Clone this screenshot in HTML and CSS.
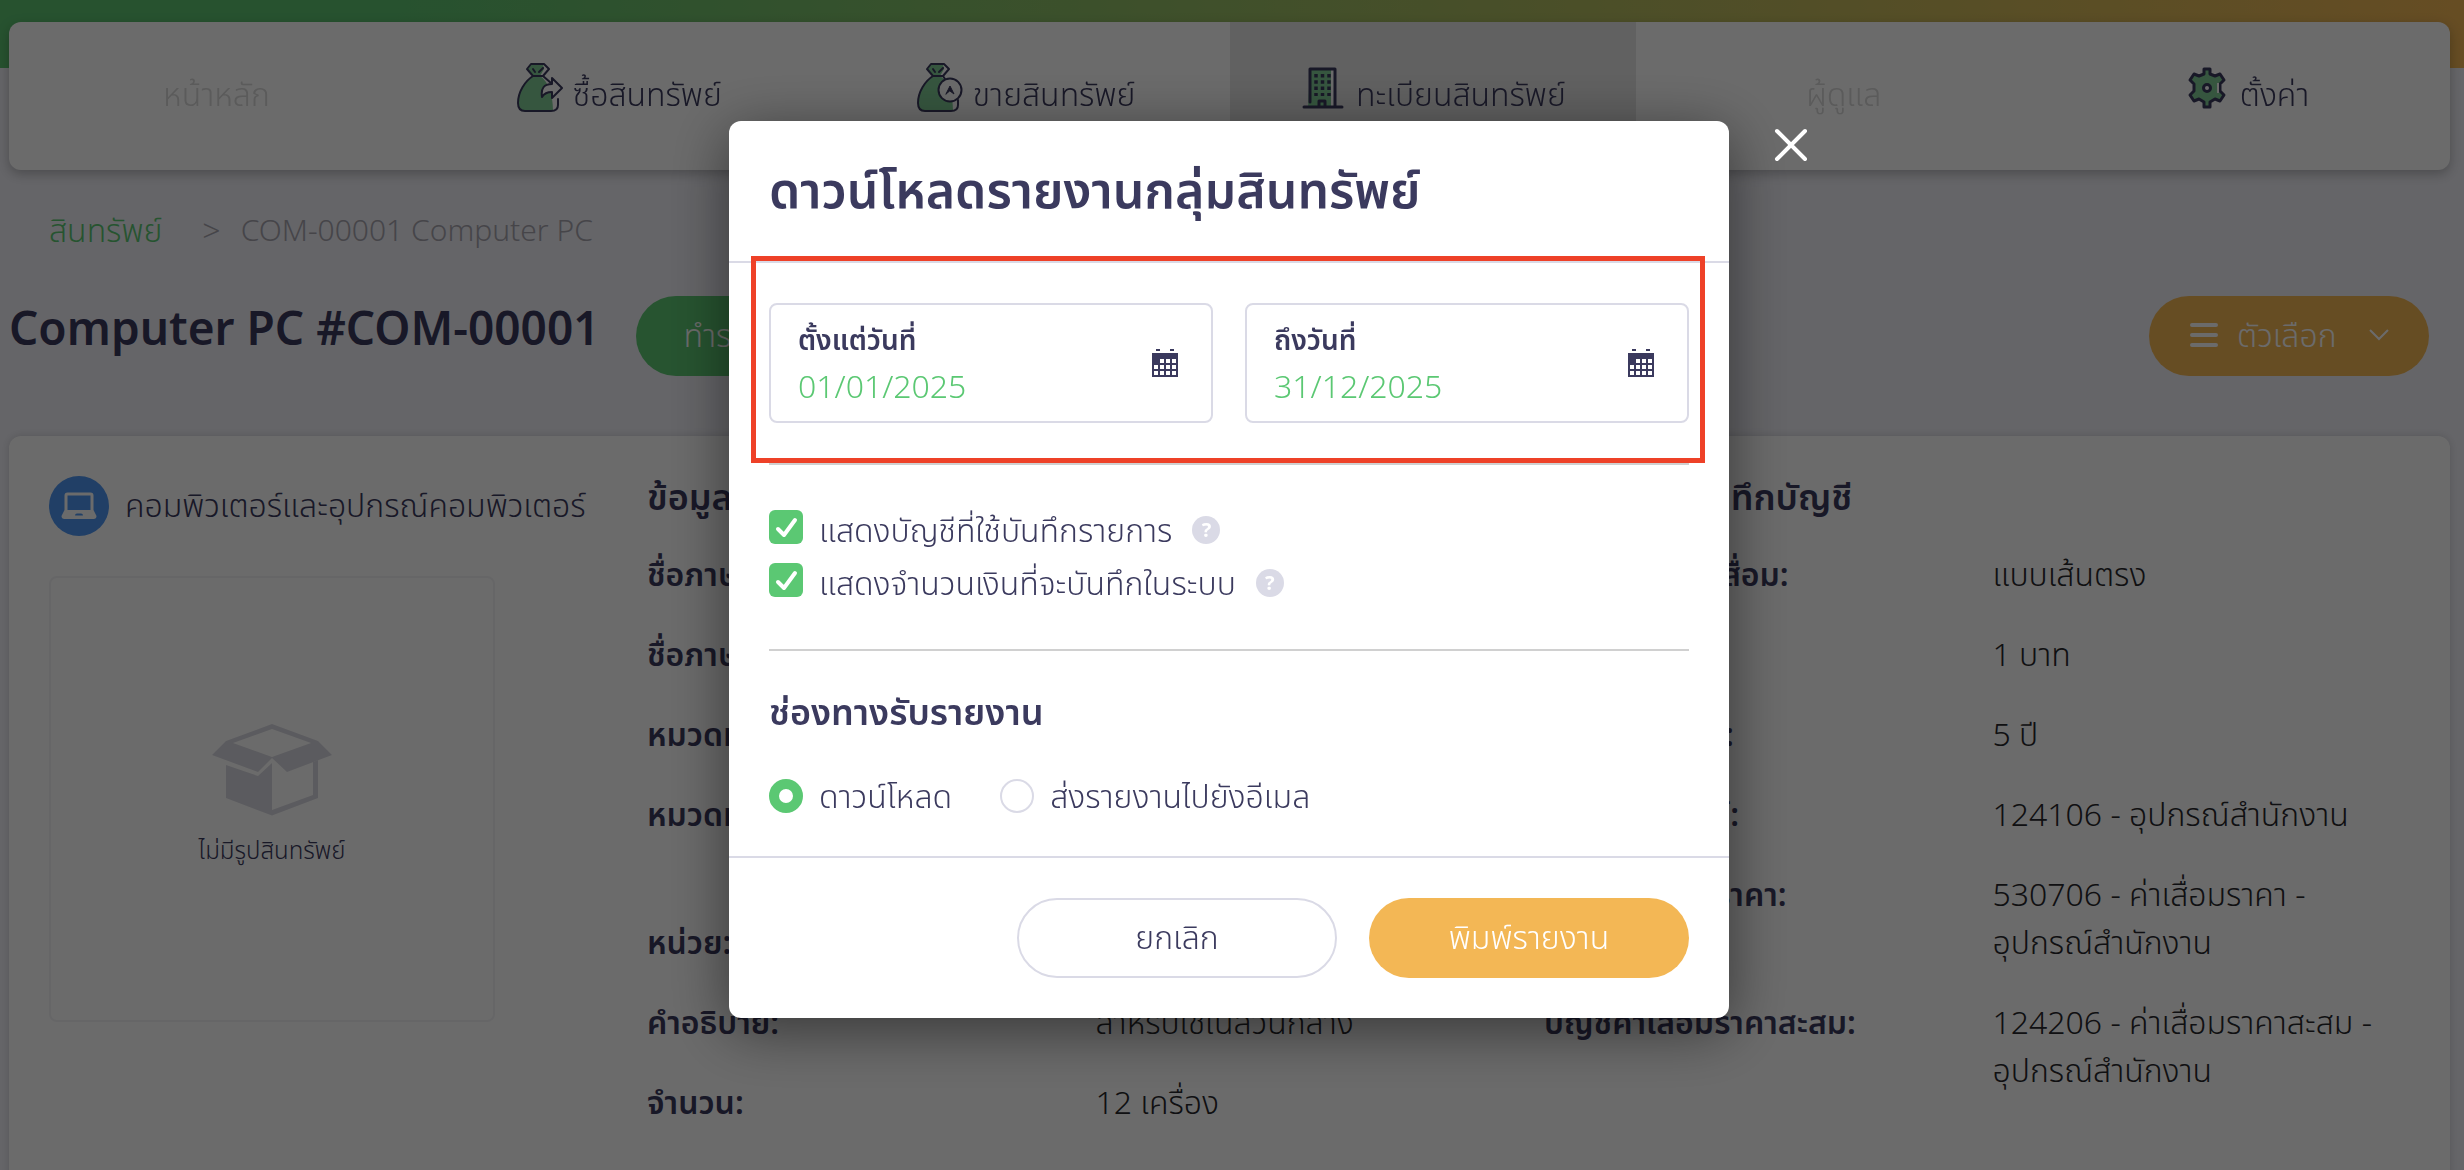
FILE: index.html
```html
<!DOCTYPE html>
<html lang="th">
<head>
<meta charset="utf-8">
<meta name="viewport" content="width=device-width, initial-scale=1">
<title>Computer PC #COM-00001</title>
<link rel="stylesheet" href="styles.css">
</head>
<body>
<div class="page">
  <nav class="tabs">
    <a class="tab tab-muted" href="#">หน้าหลัก</a>
    <a class="tab" href="#">
      <svg class="tab-icon" width="46" height="51" viewBox="0 0 46 51" fill="none" stroke="#3b3a5e" stroke-width="2" stroke-linejoin="round" stroke-linecap="round">
        <path d="M14 2H27L32 7L26 14C34 19 41 30 41 41Q41 49 34 49H8Q1 49 1 41C1 30 8 19 16 14L10 7Z" fill="#fff" stroke="none"/>
        <path d="M14 2H26L27 7L23 14C31 19 36 32 36 49H8Q1 49 1 41C1 30 8 19 16 14L10 7Z" fill="#81cd96" stroke="none"/>
        <path d="M16 14L10 7L14 2H27L32 7L26 14ZM16 7L18 10M26 6L22 10M16 14C8 19 1 30 1 41Q1 49 8 49H34Q41 49 41 43V37M26 14L34 21"/>
        <path d="M35 16L45 26L35 36V30Q28 30 25 35Q23 22 35 22Z" fill="#fff"/>
      </svg>
      <span>ซื้อสินทรัพย์</span></a>
    <a class="tab" href="#">
      <svg class="tab-icon" width="46" height="51" viewBox="0 0 46 51" fill="none" stroke="#3b3a5e" stroke-width="2" stroke-linejoin="round" stroke-linecap="round">
        <path d="M14 2H27L32 7L26 14C34 19 41 30 41 41Q41 49 34 49H8Q1 49 1 41C1 30 8 19 16 14L10 7Z" fill="#fff" stroke="none"/>
        <path d="M14 2H26L27 7L23 14C31 19 36 32 36 49H8Q1 49 1 41C1 30 8 19 16 14L10 7Z" fill="#81cd96" stroke="none"/>
        <path d="M16 14L10 7L14 2H27L32 7L26 14ZM16 7L18 10M26 6L22 10M16 14C8 19 1 30 1 41Q1 49 8 49H34Q41 49 41 43V38M26 14L28 17"/>
        <circle cx="33" cy="28" r="11.5" fill="#fff"/>
        <path d="M29 32L33 24L37 32L33 29Z" fill="#3b3a5e" stroke-width="1"/>
      </svg>
      <span>ขายสินทรัพย์</span></a>
    <a class="tab tab-active" href="#">
      <svg class="tab-icon" width="46" height="51" viewBox="0 0 46 51" fill="none" stroke="#3b3a5e" stroke-width="3" stroke-linecap="round" stroke-linejoin="round">
        <path d="M10 7H34V45H10Z" fill="#fff" stroke="none"/>
        <path d="M10 7H31V45H8Z" fill="#81cd96" stroke="none"/>
        <path d="M10 40V7H35V45M4 45H42M19 45V39H25V45"/>
        <path d="M16 12v22M22.500 12v22M29 12v22" stroke-dasharray="3.500 2.800" stroke-linecap="butt" stroke-width="3.500"/>
      </svg>
      <span>ทะเบียนสินทรัพย์</span></a>
    <a class="tab tab-muted" href="#">ผู้ดูแล</a>
    <a class="tab" href="#">
      <svg class="tab-icon" width="46" height="51" viewBox="0 0 46 51" fill="none" stroke="#3b3a5e" stroke-width="3" stroke-linejoin="round">
        <path d="M20 7H26V12L31 14L36 12L40 18L36 22V29L40 33L36 39L31 37L26 40V45H20V40L15 37L10 39L6 33L10 29V22L6 18L10 12L15 14L20 12Z" fill="#81cd96"/>
        <path d="M34 21V31" stroke="#fff" stroke-width="2"/>
        <circle cx="23" cy="26" r="3.500" fill="#fff"/>
      </svg>
      <span>ตั้งค่า</span></a>
  </nav>

  <div class="crumbs"><a href="#">สินทรัพย์</a><span class="crumb-sep">&gt;</span><span class="crumb-current">COM-00001 Computer PC</span></div>

  <div class="title-row">
    <h1>Computer PC #COM-00001</h1>
    <button class="btn btn-green" type="button">ทำรายการ</button>
    <button class="btn btn-orange btn-options" type="button">
      <svg width="30" height="26" viewBox="0 0 30 26" stroke="currentColor" stroke-width="4" stroke-linecap="round"><path d="M3 3H27M3 13H27M3 23H27"/></svg>
      <span>ตัวเลือก</span>
      <svg class="chevron" width="20" height="12" viewBox="0 0 20 12" fill="none" stroke="currentColor" stroke-width="2"><path d="M1 1L10 10L19 1"/></svg>
    </button>
  </div>

  <main class="card">
    <section>
      <div class="category">
        <svg width="60" height="60" viewBox="0 0 60 60"><circle cx="30" cy="30" r="30" fill="#4f97f2"/><path d="M17 34V19.500Q17 18 18.500 18H41.500Q43 18 43 19.500V34" fill="none" stroke="#fff" stroke-width="3"/><path d="M15.500 34H44.500L47.500 40Q47.500 43 44.500 43H15.500Q12.500 43 12.500 40Z" fill="#fff"/><path d="M26 39.500Q26 37.500 28 37.500H32Q34 37.500 34 39.500Z" fill="#4f97f2"/></svg>
        <span>คอมพิวเตอร์และอุปกรณ์คอมพิวเตอร์</span>
      </div>
      <div class="no-image">
        <svg width="120" height="92" viewBox="0 0 120 92" fill="#dadae2"><path fill-rule="evenodd" d="M60 0L106 17L120 31L75 48L60 34L46 48L0 31L14 17ZM60 5L21 19L60 33L99 19Z"/><path d="M14 41L46 52L60 39V91.500L14 74Z"/><path d="M106 36V74L60 91.500V86L101 71V38Z"/></svg>
        <p>ไม่มีรูปสินทรัพย์</p>
      </div>
    </section>
    <section>
      <h2>ข้อมูลสินทรัพย์</h2>
      <dl>
        <dt>ชื่อภาษาไทย:</dt><dd></dd>
        <dt>ชื่อภาษาอังกฤษ:</dt><dd></dd>
        <dt>หมวดหมู่:</dt><dd></dd>
        <dt>หมวดหมู่ย่อย:</dt><dd class="two-lines"></dd>
        <dt>หน่วย:</dt><dd></dd>
        <dt>คำอธิบาย:</dt><dd>สำหรับใช้ในส่วนกลาง</dd>
        <dt>จำนวน:</dt><dd>12 เครื่อง</dd>
      </dl>
    </section>
    <section>
      <h2>ข้อมูลการบันทึกบัญชี</h2>
      <dl>
        <dt>วิธีคำนวณค่าเสื่อม:</dt><dd>แบบเส้นตรง</dd>
        <dt>มูลค่าซาก:</dt><dd>1 บาท</dd>
        <dt>อายุการใช้งาน:</dt><dd>5 ปี</dd>
        <dt>บัญชีสินทรัพย์:</dt><dd>124106 - อุปกรณ์สำนักงาน</dd>
        <dt>บัญชีค่าเสื่อมราคา:</dt><dd>530706 - ค่าเสื่อมราคา -<br>อุปกรณ์สำนักงาน</dd>
        <dt>บัญชีค่าเสื่อมราคาสะสม:</dt><dd>124206 - ค่าเสื่อมราคาสะสม -<br>อุปกรณ์สำนักงาน</dd>
      </dl>
    </section>
  </main>
</div>

<div class="overlay">
  <form class="modal" role="dialog" aria-labelledby="modal-title">
    <button class="close" type="button" aria-label="ปิด"><svg width="36" height="36" viewBox="0 0 36 36" stroke="#fff" stroke-width="4" stroke-linecap="round"><path d="M4 4L32 32M32 4L4 32"/></svg></button>
    <header class="modal-head"><h2 id="modal-title">ดาวน์โหลดรายงานกลุ่มสินทรัพย์</h2></header>
    <div class="modal-body">
      <div class="dates">
        <div class="date-field">
          <div><label for="from">ตั้งแต่วันที่</label><input id="from" type="text" value="01/01/2025"></div>
          <svg width="26" height="28" viewBox="0 0 26 28"><path fill="#3b3a5e" d="M4 0h4v2H4zM18 0h4v2h-4zM0 4h26v24H0z"/><path fill="#fff" d="M8 10h4v4H8zM14 10h4v4h-4zM20 10h4v4h-4zM2 16h4v4H2zM8 16h4v4H8zM14 16h4v4h-4zM20 16h4v4h-4zM2 22h4v4H2zM8 22h4v4H8zM14 22h4v4h-4zM20 22h4v4h-4z"/></svg>
        </div>
        <div class="date-field">
          <div><label for="to">ถึงวันที่</label><input id="to" type="text" value="31/12/2025"></div>
          <svg width="26" height="28" viewBox="0 0 26 28"><path fill="#3b3a5e" d="M4 0h4v2H4zM18 0h4v2h-4zM0 4h26v24H0z"/><path fill="#fff" d="M8 10h4v4H8zM14 10h4v4h-4zM20 10h4v4h-4zM2 16h4v4H2zM8 16h4v4H8zM14 16h4v4h-4zM20 16h4v4h-4zM2 22h4v4H2zM8 22h4v4H8zM14 22h4v4h-4zM20 22h4v4h-4z"/></svg>
        </div>
      </div>
      <div class="checks">
        <div class="choice"><input class="check" type="checkbox" id="show-account" checked><label for="show-account">แสดงบัญชีที่ใช้บันทึกรายการ</label><span class="help">?</span></div>
        <div class="choice"><input class="check" type="checkbox" id="show-amount" checked><label for="show-amount">แสดงจำนวนเงินที่จะบันทึกในระบบ</label><span class="help">?</span></div>
      </div>
      <div class="channel">
        <h3>ช่องทางรับรายงาน</h3>
        <div class="radios">
          <div class="choice"><input class="radio" type="radio" name="channel" id="ch-download" checked><label for="ch-download">ดาวน์โหลด</label></div>
          <div class="choice"><input class="radio" type="radio" name="channel" id="ch-email"><label for="ch-email">ส่งรายงานไปยังอีเมล</label></div>
        </div>
      </div>
    </div>
    <footer class="modal-foot">
      <button class="btn btn-outline" type="button">ยกเลิก</button>
      <button class="btn btn-orange" type="submit">พิมพ์รายงาน</button>
    </footer>
  </form>
</div>
</body>
</html>
```
FILE: styles.css
```css
* { box-sizing: border-box; }
html, body { height: 100%; }
body {
  margin: 0;
  overflow: hidden;
  background: #f1f1f8;
  color: #3b3a5e;
  font-family: "Noto Sans", "Noto Sans Thai", sans-serif;
  font-size: 32px;
  font-weight: 350;
  line-height: 48px;
}
h1, h2, h3, p, dl, dd { margin: 0; }
a { color: inherit; text-decoration: none; }
button, input { font: inherit; color: inherit; }

.page {
  padding: 22px 14px 0 9px;
  background: linear-gradient(90deg, #5dc371 0%, #5dc371 16%, #f3b755 100%) no-repeat top / 100% 68px;
}

.tabs {
  display: grid;
  grid-template-columns: repeat(6, 1fr);
  height: 148px;
  overflow: hidden;
  border-radius: 12px;
  background: #fff;
  filter: drop-shadow(0 4px 6px rgba(0, 0, 0, .25));
}
.tab { display: flex; align-items: center; justify-content: center; gap: 10px; padding-bottom: 4px; }
.tab-icon { margin-bottom: 14px; }
.tab-muted { padding-left: 8px; color: #d8d8d8; }
.tab-active { background: #e6e6e6; }

.crumbs { display: flex; gap: 20px; padding: 36px 40px 2px; color: #a7a5af; }
.crumbs a { color: #5bc873; }
.crumb-sep { margin-left: 20px; }
.crumb-current { font-size: 30px; }

.title-row { display: flex; align-items: center; gap: 40px; margin-top: 40px; padding-right: 21px; }
h1 { margin-right: -4px; padding-bottom: 18px; font-size: 46px; font-weight: 600; line-height: 60px; }
.btn {
  height: 80px;
  border: 0;
  border-radius: 40px;
  padding: 0 48px 2px;
  color: #fff;
  cursor: pointer;
}
.btn-green { background: #5dc873; }
.btn-orange { background: #f3b755; }
.btn-outline { border: 2px solid #dadae6; background: #fff; color: #3b3a5e; }
.btn-options {
  display: flex;
  align-items: center;
  gap: 18px;
  width: 280px;
  margin-left: auto;
  padding: 0 40px 2px;
}
.chevron { margin-left: auto; }

.card {
  display: grid;
  grid-template-columns: 4fr 6fr 6fr;
  margin-top: 60px;
  padding: 40px 9px 60px 40px;
  border-radius: 12px;
  background: #fff;
  box-shadow: 0 0 8px rgba(0, 0, 0, .15);
}
.card section { min-width: 0; }
.category { display: flex; align-items: center; gap: 16px; white-space: nowrap; }
.category span { padding-bottom: 2px; }
.no-image {
  display: flex;
  flex-direction: column;
  align-items: center;
  justify-content: center;
  gap: 10px;
  width: 446px;
  height: 446px;
  margin-top: 40px;
  border: 2px solid #f3f3f6;
  border-radius: 8px;
  font-size: 24px;
}
.card h2 { font-size: 36px; font-weight: 600; line-height: 42px; }
dl { display: grid; grid-template-columns: 1fr 1fr; row-gap: 32px; padding-top: 32px; }
dt { font-weight: 600; white-space: nowrap; }
dd { color: #28282c; }
.two-lines { min-height: 96px; }

.overlay {
  position: fixed;
  inset: 0;
  display: flex;
  align-items: flex-start;
  justify-content: center;
  padding: 121px 6px 0 0;
  background: rgba(0, 0, 0, .58);
}
.modal {
  position: relative;
  width: 1000px;
  border-radius: 12px;
  background: #fff;
  box-shadow: 0 12px 60px rgba(0, 0, 0, .5);
}
.close {
  position: absolute;
  top: 6px;
  right: -80px;
  padding: 0;
  border: 0;
  background: none;
  line-height: 0;
}
.modal-head { padding: 38px 40px 42px; border-bottom: 2px solid #dadae6; }
.modal-head h2 { font-size: 50px; font-weight: 600; line-height: 60px; }
.modal-body { padding: 0 40px; }
.dates {
  position: relative;
  display: grid;
  grid-template-columns: 1fr 1fr;
  gap: 32px;
  padding: 40px 0;
  border-bottom: 2px solid #d0d0d0;
}
.dates::after {
  content: "";
  position: absolute;
  inset: -7px -16px 0 -18px;
  border: 5px solid #ee4128;
  pointer-events: none;
}
.date-field {
  display: flex;
  align-items: center;
  justify-content: space-between;
  height: 120px;
  padding: 0 33px 0 27px;
  border: 2px solid #dadae6;
  border-radius: 8px;
}
.date-field label { display: block; font-size: 28px; font-weight: 600; }
.date-field input {
  display: block;
  width: 260px;
  height: 48px;
  padding: 0 0 2px;
  border: 0;
  background: none;
  color: #5bc873;
}
.checks { padding: 38px 0 40px; border-bottom: 2px solid #d0d0d0; }
.choice { display: flex; align-items: center; gap: 16px; height: 53px; }
.check, .radio { appearance: none; width: 34px; height: 34px; margin: 0; }
.check {
  margin-bottom: 6px;
  border-radius: 6px;
  background: #5bc873 url("data:image/svg+xml,%3Csvg xmlns='http://www.w3.org/2000/svg' viewBox='0 0 34 34' fill='none' stroke='white' stroke-width='4' stroke-linecap='round' stroke-linejoin='round'%3E%3Cpath d='M9 19L15 25L26 10'/%3E%3C/svg%3E");
}
.radio { border: 2px solid #dadae6; border-radius: 50%; }
.radio:checked { border: 10px solid #5bc873; }
.help {
  width: 28px;
  height: 28px;
  margin-left: 4px;
  border-radius: 50%;
  background: #dadae6;
  color: #fff;
  font-size: 20px;
  font-weight: 700;
  line-height: 28px;
  text-align: center;
}
.channel { padding: 36px 0 34px; }
.channel h3 { font-size: 36px; font-weight: 600; line-height: 50px; }
.radios { display: flex; gap: 48px; padding-top: 32px; }
.modal-foot {
  display: flex;
  justify-content: flex-end;
  gap: 32px;
  padding: 40px;
  border-top: 2px solid #dadae6;
}
.modal-foot .btn { width: 320px; }
```
